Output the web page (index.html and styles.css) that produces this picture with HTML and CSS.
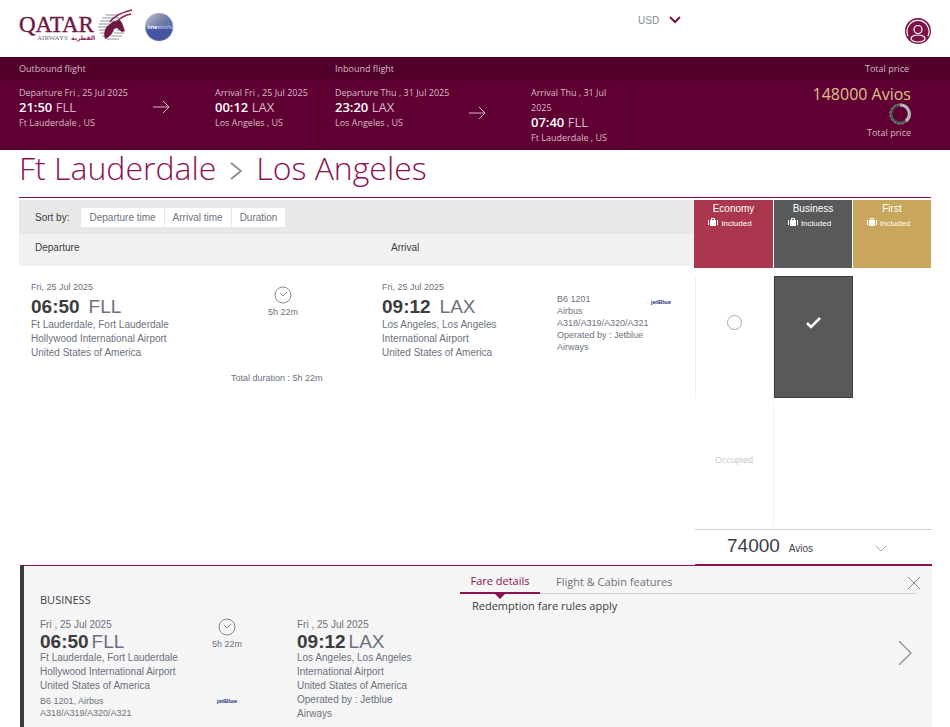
FILE: index.html
```html
<!DOCTYPE html>
<html lang="en">

<head>
  <meta charset="UTF-8">
  <meta name="viewport" content="width=device-width, initial-scale=1.0">
  <title>Qatar Airways - Select flights</title>
  <link rel="stylesheet" href="styles.css">
</head>

<body>
  <header class="header">
    <a class="logo" href="#" aria-label="Qatar Airways">
      <svg width="156" height="38" viewBox="0 0 156 38">
        <text class="logo-name" x="0" y="24">QATAR</text>
        <text class="logo-sub" x="18" y="32">AIRWAYS</text>
        <text class="logo-arabic" x="52" y="32">القطرية</text>
        <!-- oryx -->
        <path d="M87 7h12M83 10h17M81 13h15M80 16h11M79 19h10M80 22h8M81 25h7M83 28h4M98 22h6M95 25h10M92 28h11M88 31h12" fill="none" stroke="#b4b6bc" stroke-width="1.600"/>
        <path d="M86 31c-2-6 0-12 5-15 3-3 7-4 10-4l2 3 3 8-3 1-5-4-3 1c-1 4-4 8-9 10z" fill="#6e1742"/>
        <path d="M91 14C95 8 104 4 113 2M97 14C101 10 106 7 112 6" fill="none" stroke="#8a2555" stroke-width="1.500"/>
        <!-- oneworld -->
        <defs>
          <linearGradient id="globe" x1="0" y1="0" x2="1" y2="1">
            <stop offset="0" stop-color="#c3c6d2"/>
            <stop offset=".45" stop-color="#7480aa"/>
            <stop offset="1" stop-color="#3d4ea2"/>
          </linearGradient>
        </defs>
        <circle cx="140" cy="19" r="14" fill="url(#globe)"/>
        <path d="M127 19h26a13 13 0 0 1-26 0z" fill="#4456a2"/>
        <text class="logo-world" x="128" y="21">one<tspan fill="#b5bdd8">world</tspan></text>
      </svg>
    </a>
    <div class="currency">
      <select class="currency-select" aria-label="Currency">
        <option>USD</option>
      </select>
      <svg width="12" height="8" viewBox="0 0 12 8"><path d="M1 1l5 5 5-5" fill="none" stroke="#6e1742" stroke-width="2"/></svg>
    </div>
    <button class="profile" aria-label="Profile">
      <svg width="26" height="26" viewBox="0 0 26 26">
        <circle cx="13" cy="13" r="13" fill="#7c1248"/>
        <g fill="none" stroke="#fff" stroke-width="1.200">
          <path d="M3 18a11 11 0 1 1 20 0"/>
          <circle cx="13" cy="11.500" r="4"/>
          <ellipse cx="13" cy="20.500" rx="7" ry="3.500"/>
        </g>
      </svg>
    </button>
  </header>

  <section class="summary">
    <div class="summary-head">
      <span>Outbound flight</span>
      <span>Inbound flight</span>
      <span class="right">Total price</span>
    </div>
    <div class="summary-body">
      <div class="leg">
        <div class="stop">
          <p>Departure Fri , 25 Jul 2025</p>
          <p class="stop-time"><b>21:50</b> FLL</p>
          <p>Ft Lauderdale , US</p>
        </div>
        <svg class="arrow" width="17" height="14" viewBox="0 0 17 14"><path d="M0 7h16M10 1l6 6-6 6" fill="none" stroke="#d9b9ca"/></svg>
        <div class="stop">
          <p>Arrival Fri , 25 Jul 2025</p>
          <p class="stop-time"><b>00:12</b> LAX</p>
          <p>Los Angeles , US</p>
        </div>
      </div>
      <div class="leg">
        <div class="stop">
          <p>Departure Thu , 31 Jul 2025</p>
          <p class="stop-time"><b>23:20</b> LAX</p>
          <p>Los Angeles , US</p>
        </div>
        <svg class="arrow" width="17" height="14" viewBox="0 0 17 14"><path d="M0 7h16M10 1l6 6-6 6" fill="none" stroke="#d9b9ca"/></svg>
        <div class="stop">
          <p>Arrival Thu , 31 Jul 2025</p>
          <p class="stop-time"><b>07:40</b> FLL</p>
          <p>Ft Lauderdale , US</p>
        </div>
      </div>
      <div class="total">
        <p class="total-price">148000 Avios</p>
        <svg width="22" height="22" viewBox="0 0 22 22" fill="none" stroke-width="3">
          <circle cx="11" cy="11" r="9" stroke="#4c5250"/>
          <path d="M11 2a9 9 0 0 1 6 16" stroke="#b9bcc0"/>
          <circle cx="11" cy="11" r="10" stroke="#a4a4a9" stroke-width="1" stroke-dasharray="2 2"/>
        </svg>
        <p>Total price</p>
      </div>
    </div>
  </section>

  <main class="main">
    <h1 class="route">
      Ft Lauderdale
      <svg width="12" height="18" viewBox="0 0 12 18"><path d="M1 1l10 8-10 8" fill="none" stroke="#848a94" stroke-width="1.800"/></svg>
      Los Angeles
    </h1>

    <div class="table-head">
      <div class="filters">
        <div class="sort">
          <span class="sort-label">Sort by:</span>
          <button>Departure time</button>
          <button>Arrival time</button>
          <button>Duration</button>
        </div>
        <div class="columns">
          <span>Departure</span>
          <span>Arrival</span>
        </div>
      </div>
      <div class="cabin economy">
        <p>Economy</p>
        <p class="included"><svg width="10" height="9" viewBox="0 0 10 9"><path d="M0 2h1v5H0zM2 2h1V0h4v2h1v6H2zM4 1v1h2V1zM9 2h1v5H9z" fill="#fff" fill-rule="evenodd"/></svg>Included</p>
      </div>
      <div class="cabin business">
        <p>Business</p>
        <p class="included"><svg width="10" height="9" viewBox="0 0 10 9"><path d="M0 2h1v5H0zM2 2h1V0h4v2h1v6H2zM4 1v1h2V1zM9 2h1v5H9z" fill="#fff" fill-rule="evenodd"/></svg>Included</p>
      </div>
      <div class="cabin first">
        <p>First</p>
        <p class="included"><svg width="10" height="9" viewBox="0 0 10 9"><path d="M0 2h1v5H0zM2 2h1V0h4v2h1v6H2zM4 1v1h2V1zM9 2h1v5H9z" fill="#fff" fill-rule="evenodd"/></svg>Included</p>
      </div>
    </div>

    <div class="flight">
      <div class="flight-info">
        <div class="flight-row">
          <div class="airport">
            <p class="date">Fri, 25 Jul 2025</p>
            <p class="time"><b>06:50</b>FLL</p>
            <p>Ft Lauderdale, Fort Lauderdale Hollywood International Airport</p>
            <p>United States of America</p>
          </div>
          <div class="duration">
            <svg width="18" height="18" viewBox="0 0 18 18" fill="none" stroke="#858a93"><circle cx="9" cy="9" r="8"/><path d="M6 7l3 3 4-4"/></svg>
            <p>5h 22m</p>
          </div>
          <div class="airport">
            <p class="date">Fri, 25 Jul 2025</p>
            <p class="time"><b>09:12</b>LAX</p>
            <p>Los Angeles, Los Angeles International Airport</p>
            <p>United States of America</p>
          </div>
          <div class="aircraft">
            <p>B6 1201</p>
            <p>Airbus A318/A319/A320/A321</p>
            <p>Operated by : Jetblue Airways</p>
          </div>
          <span class="jetblue">jetBlue</span>
        </div>
        <p class="total-duration">Total duration : 5h 22m</p>
      </div>

      <div class="fares">
        <div class="fare-grid">
          <label class="fare"><input type="radio" name="fare" aria-label="Economy"></label>
          <label class="fare selected">
            <input type="radio" name="fare" aria-label="Business" checked>
            <svg width="16" height="12" viewBox="0 0 16 12"><path d="M1 6l4 4 9-9" fill="none" stroke="#fff" stroke-width="2.500"/></svg>
          </label>
          <div></div>
          <div class="fare occupied">Occupied</div>
        </div>
        <button class="price">
          <span class="price-value">74000</span>
          <span>Avios</span>
          <svg width="10" height="6" viewBox="0 0 10 6"><path d="M0 0l5 5 5-5" fill="none" stroke="#a5a8ad"/></svg>
        </button>
      </div>
    </div>

    <section class="details">
      <div class="details-flight">
        <h2>BUSINESS</h2>
        <div class="details-row">
          <div class="airport">
            <p class="date">Fri , 25 Jul 2025</p>
            <p class="time"><b>06:50</b>FLL</p>
            <p>Ft Lauderdale, Fort Lauderdale Hollywood International Airport</p>
            <p>United States of America</p>
            <p class="plane">B6 1201, Airbus A318/A319/A320/A321</p>
          </div>
          <div class="duration">
            <svg width="18" height="18" viewBox="0 0 18 18" fill="none" stroke="#858a93"><circle cx="9" cy="9" r="8"/><path d="M6 7l3 3 4-4"/></svg>
            <p>5h 22m</p>
            <span class="jetblue">jetBlue</span>
          </div>
          <div class="airport arrival">
            <p class="date">Fri , 25 Jul 2025</p>
            <p class="time"><b>09:12</b>LAX</p>
            <p>Los Angeles, Los Angeles International Airport</p>
            <p>United States of America</p>
            <p>Operated by : Jetblue Airways</p>
          </div>
        </div>
      </div>
      <div class="details-fare">
        <div class="tabs">
          <button class="tab active">Fare details</button>
          <button class="tab">Flight &amp; Cabin features</button>
        </div>
        <p class="rules">Redemption fare rules apply</p>
      </div>
      <div class="details-actions">
        <button aria-label="Close"><svg width="12" height="12" viewBox="0 0 12 12"><path d="M0 0l12 12M12 0L0 12" stroke="#858a93"/></svg></button>
        <button aria-label="Next"><svg width="14" height="24" viewBox="0 0 14 24"><path d="M1 0l12 12L1 24" fill="none" stroke="#858a93" stroke-width="1.200"/></svg></button>
      </div>
    </section>
  </main>
</body>

</html>
```

FILE: styles.css
```css
html {
  box-sizing: border-box;
}

*,
*:after,
*:before {
  box-sizing: inherit;
}

body {
  margin: 0;
  min-height: 100vh;
  display: flex;
  flex-direction: column;
  font-family: "Liberation Sans", Arial, sans-serif;
  font-size: 10px;
  color: #6d717e;
  background-color: #fff;
}

p,
h1,
h2 {
  margin: 0;
  font-weight: normal;
}

svg {
  display: block;
  flex-shrink: 0;
}

button {
  padding: 0;
  border: 0;
  background: none;
  font: inherit;
  color: inherit;
  cursor: pointer;
}

/* header */
.header {
  display: flex;
  height: 57px;
  padding: 8px 19px 0;
}

.logo-name {
  font: 23px "Liberation Serif", serif;
  fill: #6e1742;
  stroke: #6e1742;
  stroke-width: .4;
}

.logo-sub {
  font: 7px "Liberation Serif", serif;
  fill: #6b6d78;
}

.logo-arabic {
  font: bold 6px "DejaVu Sans", sans-serif;
  fill: #8a2555;
}

.logo-world {
  font: bold 6px "Liberation Sans", sans-serif;
  fill: #fff;
}

.currency {
  display: flex;
  align-items: center;
  gap: 9px;
  height: 24px;
  margin-left: auto;
}

.currency-select {
  appearance: none;
  padding: 0;
  border: 0;
  background: none;
  font: inherit;
  color: #848a94;
}

.profile {
  align-self: flex-start;
  margin: 10px 0 0 224px;
}

/* booking summary */
.summary {
  font-family: "Open Sans", sans-serif;
  font-size: 9px;
  font-weight: 300;
  line-height: 15px;
  color: #d9b9ca;
  background-color: #600032;
  border-bottom: 2px solid #520029;
}

.summary-head,
.summary-body {
  display: grid;
  grid-template-columns: 300fr 312fr 300fr;
  padding: 0 19px;
}

.summary-head {
  padding: 4px 19px 5px;
  font-weight: 400;
  background-color: #50002a;
}

.summary-head span:nth-child(2) {
  padding-left: 16px;
}

.summary-head .right {
  padding-right: 22px;
  text-align: right;
}

.summary-body {
  padding: 4px 19px 3px;
}

.leg {
  display: grid;
  grid-template-columns: 134px 62px 1fr;
  border-right: 1px solid #520029;
}

.leg + .leg {
  padding-left: 16px;
  padding-right: 12px;
}

.arrow {
  align-self: center;
  margin-top: -4px;
}

.leg:first-child .arrow {
  align-self: start;
  margin-top: 15px;
}

.stop-time {
  margin-bottom: 1px;
  font-size: 13px;
  line-height: 14px;
}

.stop-time b {
  font-weight: 600;
  color: #fff;
}

.total {
  display: flex;
  flex-direction: column;
  align-items: flex-end;
  padding-right: 20px;
}

.total-price {
  font-size: 16px;
  line-height: 18px;
  color: #dcc08b;
}

/* results */
.main {
  display: flex;
  flex-direction: column;
  flex-grow: 1;
  padding: 0 19px;
}

.route {
  display: flex;
  align-items: center;
  gap: 14px;
  height: 48px;
  padding-bottom: 12px;
  border-bottom: 1px solid #8a1253;
  font: 300 32px "Open Sans", sans-serif;
  line-height: 36px;
  color: #8a1253;
}

.route svg {
  margin-top: 6px;
}

.table-head {
  display: grid;
  grid-template-columns: 1fr 79px 78px 78px;
  column-gap: 1px;
  margin-top: 2px;
}

.filters {
  align-self: start;
  margin-right: -1px;
}

.sort {
  display: flex;
  align-items: center;
  gap: 1px;
  height: 34px;
  padding-left: 16px;
  background-color: #e8e8e8;
}

.sort-label {
  margin-right: 11px;
  color: #3c3c46;
}

.sort button {
  height: 19px;
  padding: 0 8px;
  background-color: #fff;
}

.columns {
  display: grid;
  grid-template-columns: 356fr 303fr;
  height: 32px;
  padding: 8px 0 0 16px;
  color: #3c3c46;
  background-color: #f1f1f1;
}

.cabin {
  height: 68px;
  padding-top: 3px;
  text-align: center;
  line-height: 12px;
  color: #fff;
}

.included {
  display: flex;
  justify-content: center;
  gap: 3px;
  margin-top: 3px;
  padding-right: 7px;
  font-size: 8px;
}

.economy {
  background-color: #aa374e;
}

.business {
  background-color: #58595b;
}

.first {
  background-color: #c9a75c;
}

.flight {
  display: grid;
  grid-template-columns: 1fr 237px;
  margin-top: 8px;
  margin-right: -1px;
}

.flight-row {
  display: grid;
  grid-template-columns: 192fr 159fr 175fr 94fr 44fr;
  padding: 4px 0 0 12px;
}

.airport {
  max-width: 155px;
  line-height: 14px;
}

.time {
  padding-top: 2px;
  font-size: 19px;
  line-height: 22px;
}

.time b {
  margin-right: 9px;
  color: #3c3c3e;
}

.flight .date {
  font-size: 9px;
}

.duration {
  display: flex;
  flex-direction: column;
  align-items: center;
  width: 120px;
  padding-top: 6px;
  font-size: 9px;
  line-height: 16px;
}

.aircraft {
  padding-top: 13px;
  font-size: 9px;
  line-height: 12px;
}

.jetblue {
  font-size: 6px;
  font-weight: bold;
  line-height: 10px;
  color: #24357e;
}

.flight .jetblue {
  padding-top: 17px;
}

.total-duration {
  padding: 13px 0 0 212px;
  font-size: 9px;
}

.fares {
  display: flex;
  flex-direction: column;
}

.fare-grid {
  display: grid;
  grid-template-columns: 79px 79px 79px;
  grid-auto-rows: 122px;
  row-gap: 6px;
}

.fare {
  display: flex;
  align-items: center;
  justify-content: center;
  padding-bottom: 29px;
  border: 1px solid #f0f0f0;
  border-width: 0 1px;
}

.fare input {
  appearance: none;
  width: 15px;
  height: 15px;
  margin: 0;
  border: 1px solid #a5a8ad;
  border-radius: 50%;
}

.fare.selected {
  background-color: #58595b;
  border: 1px solid #3c3c3e;
}

.selected input {
  width: 0;
  border: 0;
}

.occupied {
  padding-bottom: 10px;
  border-left: 0;
  font-size: 9px;
  color: #c9c9c9;
}

.price {
  display: flex;
  align-items: baseline;
  gap: 9px;
  height: 37px;
  margin-top: 3px;
  padding: 5px 46px 0 32px;
  border-top: 1px solid #cfcfcf;
  border-bottom: 2px solid #8a1253;
  color: #3c3c46;
}

.price-value {
  font-size: 19px;
}

.price svg {
  margin-left: auto;
}

/* fare details */
.details {
  display: grid;
  grid-template-columns: 436fr 456fr 16px;
  flex-grow: 1;
  margin: -1px -1px 0 1px;
  border-top: 1px solid #8a1253;
  border-left: 4px solid #3c3c3e;
  background-color: #f5f5f5;
}

.details-flight {
  padding: 26px 0 0 16px;
}

.details-flight h2 {
  font: 11px/16px "Open Sans", sans-serif;
  color: #3c3c46;
}

.details-row {
  display: grid;
  grid-template-columns: 172px 85px 1fr;
  padding-top: 10px;
}

.details .airport {
  max-width: 150px;
}

.details .arrival {
  max-width: 125px;
}

.details .time {
  padding-top: 1px;
  line-height: 18px;
}

.details .time b {
  margin-right: 3px;
}

.details .duration {
  width: 30px;
  padding-top: 0;
  white-space: nowrap;
}

.details .jetblue {
  margin-top: 44px;
}

.plane {
  padding-top: 2px;
  font-size: 9px;
  line-height: 12px;
}

.details-fare {
  font-family: "Open Sans", sans-serif;
  font-size: 11px;
}

.tabs {
  display: flex;
  height: 28px;
  border-bottom: 1px solid #cfcfcf;
}

.tab {
  height: 28px;
  padding: 2px 16px 0;
}

.tab.active {
  position: relative;
  width: 80px;
  padding: 2px 0 0;
  color: #8a1253;
  border-bottom: 2px solid #8a1253;
}

/* pointer under the open tab */
.tab.active:after {
  content: "";
  position: absolute;
  top: 100%;
  left: 50%;
  margin-left: -7px;
  border: 7px solid transparent;
  border-top-color: #8a1253;
  border-bottom: 0;
}

.rules {
  padding: 4px 12px;
  color: #3c3c46;
}

.details-actions {
  display: flex;
  flex-direction: column;
  align-items: flex-end;
  gap: 52px;
  padding-top: 11px;
}

.details-actions button {
  margin-right: 20px;
}

.details-actions button:first-child {
  margin-right: 12px;
}
```
